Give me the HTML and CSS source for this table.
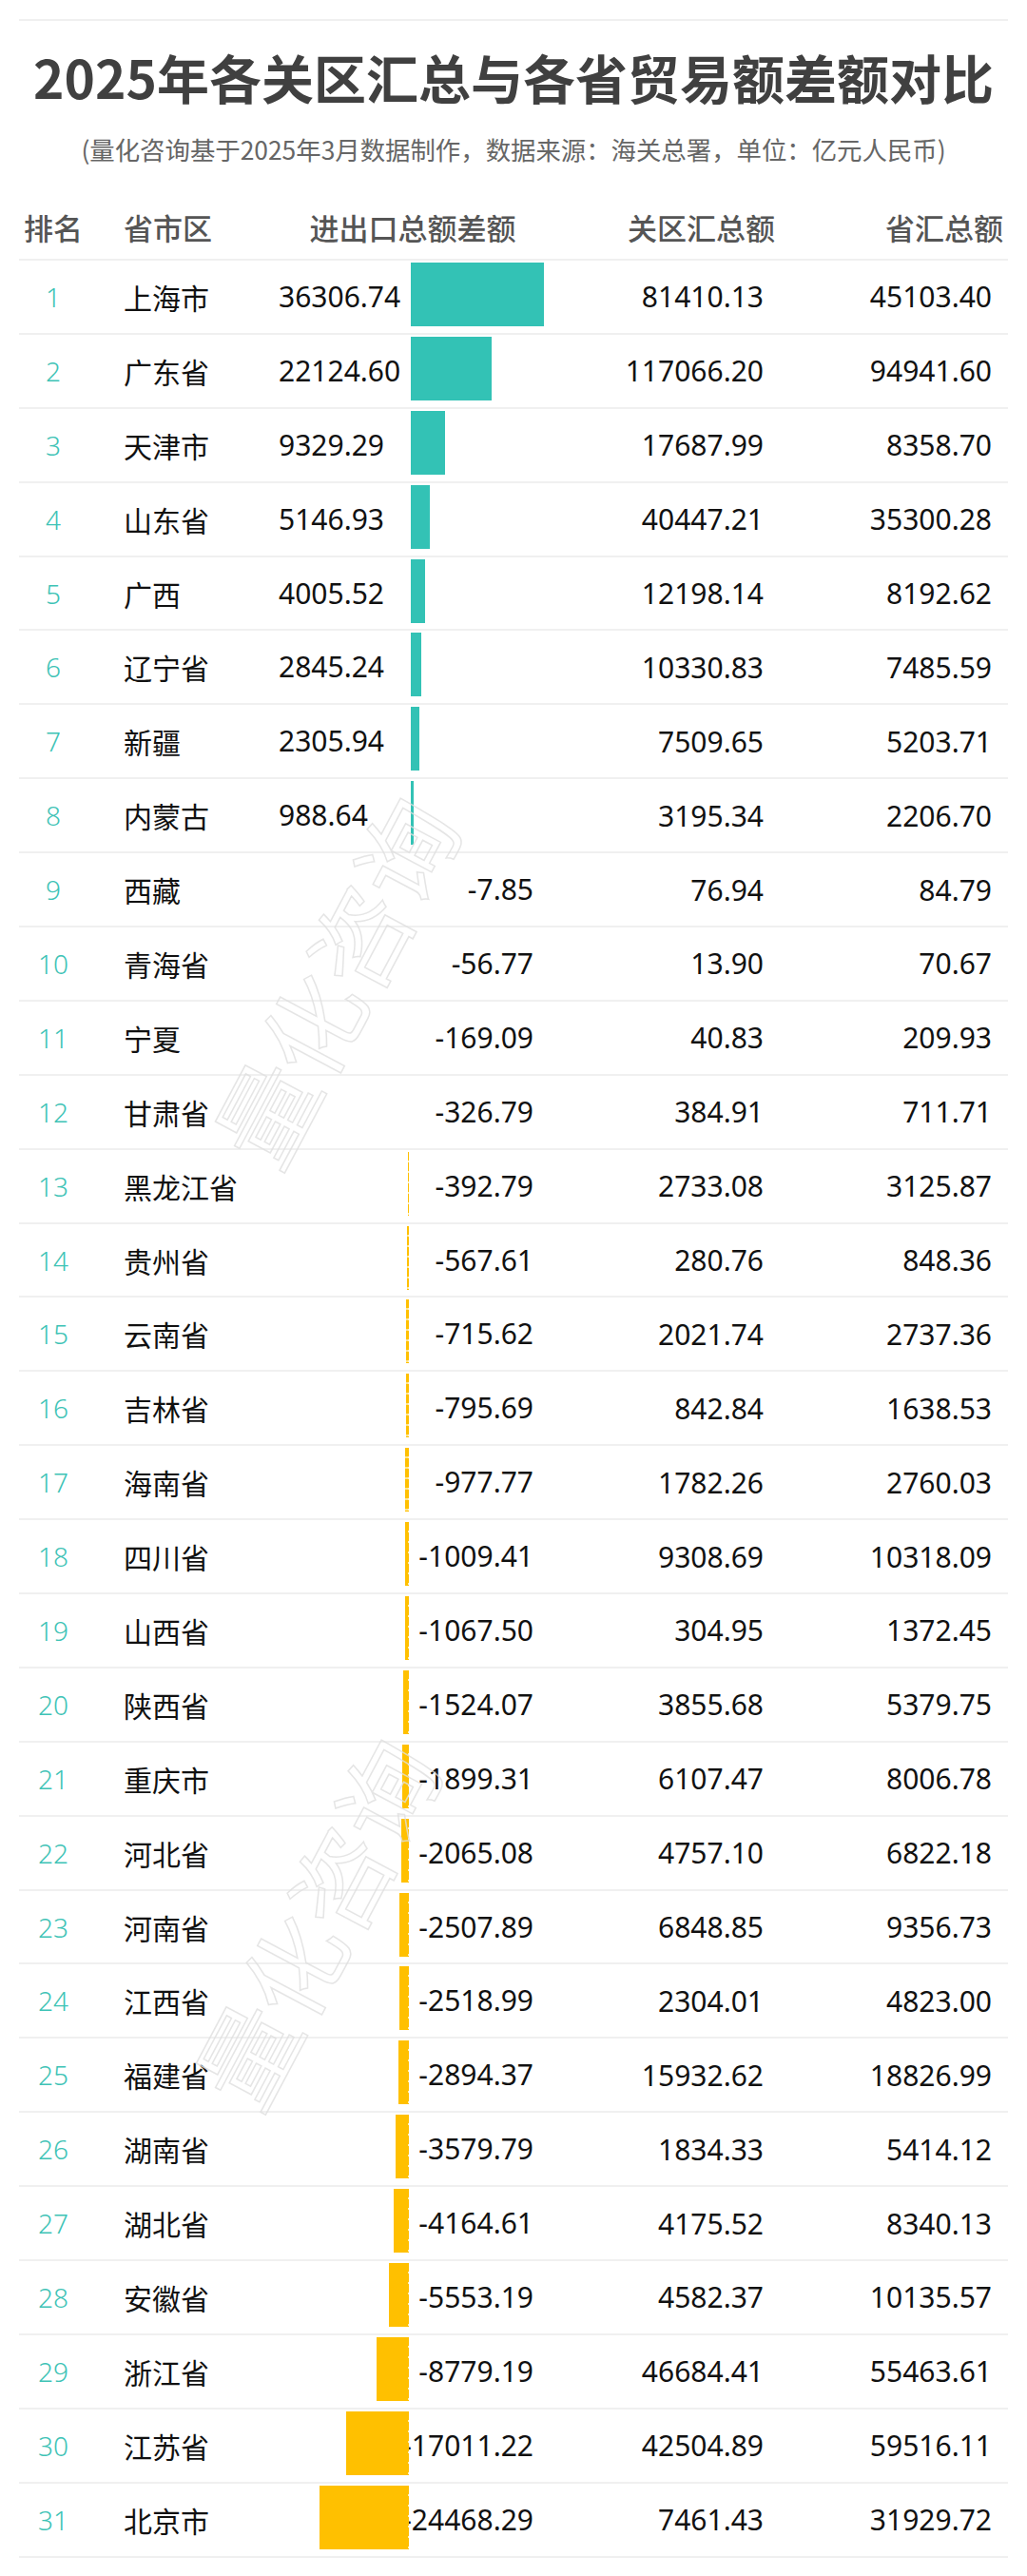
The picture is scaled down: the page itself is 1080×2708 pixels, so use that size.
FILE: index.html
```html
<!DOCTYPE html>
<html lang="zh-CN">
<head>
<meta charset="utf-8">
<title>2025年各关区汇总与各省贸易额差额对比</title>
<link rel="stylesheet" href="styles.css">
</head>
<body>
<div class="page">
  <div class="rule"></div>
  <h1 class="title">2025年各关区汇总与各省贸易额差额对比</h1>
  <p class="subtitle">(量化咨询基于2025年3月数据制作，数据来源：海关总署，单位：亿元人民币)</p>
  <div class="table">
    <div class="row head">
      <div class="c-rank">排名</div>
      <div class="c-name">省市区</div>
      <div class="c-diff">进出口总额差额</div>
      <div class="c-num">关区汇总额</div>
      <div class="c-num">省汇总额</div>
    </div>

    <div class="row pos"><div class="c-rank">1</div><div class="c-name">上海市</div><div class="c-diff"><div class="track"><span class="neg-half"></span><span class="pos-half"><i class="bar" style="width:140px"></i></span></div><span class="val">36306.74</span></div><div class="c-num">81410.13</div><div class="c-num">45103.40</div></div>
    <div class="row pos"><div class="c-rank">2</div><div class="c-name">广东省</div><div class="c-diff"><div class="track"><span class="neg-half"></span><span class="pos-half"><i class="bar" style="width:85.3px"></i></span></div><span class="val">22124.60</span></div><div class="c-num">117066.20</div><div class="c-num">94941.60</div></div>
    <div class="row pos"><div class="c-rank">3</div><div class="c-name">天津市</div><div class="c-diff"><div class="track"><span class="neg-half"></span><span class="pos-half"><i class="bar" style="width:36px"></i></span></div><span class="val">9329.29</span></div><div class="c-num">17687.99</div><div class="c-num">8358.70</div></div>
    <div class="row pos"><div class="c-rank">4</div><div class="c-name">山东省</div><div class="c-diff"><div class="track"><span class="neg-half"></span><span class="pos-half"><i class="bar" style="width:19.8px"></i></span></div><span class="val">5146.93</span></div><div class="c-num">40447.21</div><div class="c-num">35300.28</div></div>
    <div class="row pos"><div class="c-rank">5</div><div class="c-name">广西</div><div class="c-diff"><div class="track"><span class="neg-half"></span><span class="pos-half"><i class="bar" style="width:15.4px"></i></span></div><span class="val">4005.52</span></div><div class="c-num">12198.14</div><div class="c-num">8192.62</div></div>
    <div class="row pos"><div class="c-rank">6</div><div class="c-name">辽宁省</div><div class="c-diff"><div class="track"><span class="neg-half"></span><span class="pos-half"><i class="bar" style="width:11px"></i></span></div><span class="val">2845.24</span></div><div class="c-num">10330.83</div><div class="c-num">7485.59</div></div>
    <div class="row pos"><div class="c-rank">7</div><div class="c-name">新疆</div><div class="c-diff"><div class="track"><span class="neg-half"></span><span class="pos-half"><i class="bar" style="width:8.9px"></i></span></div><span class="val">2305.94</span></div><div class="c-num">7509.65</div><div class="c-num">5203.71</div></div>
    <div class="row pos"><div class="c-rank">8</div><div class="c-name">内蒙古</div><div class="c-diff"><div class="track"><span class="neg-half"></span><span class="pos-half"><i class="bar" style="width:3px"></i></span></div><span class="val">988.64</span></div><div class="c-num">3195.34</div><div class="c-num">2206.70</div></div>

    <div class="row neg"><div class="c-rank">9</div><div class="c-name">西藏</div><div class="c-diff"><div class="track"><span class="neg-half"></span><span class="pos-half"></span></div><span class="val">-7.85</span></div><div class="c-num">76.94</div><div class="c-num">84.79</div></div>
    <div class="row neg"><div class="c-rank">10</div><div class="c-name">青海省</div><div class="c-diff"><div class="track"><span class="neg-half"></span><span class="pos-half"></span></div><span class="val">-56.77</span></div><div class="c-num">13.90</div><div class="c-num">70.67</div></div>
    <div class="row neg"><div class="c-rank">11</div><div class="c-name">宁夏</div><div class="c-diff"><div class="track"><span class="neg-half"></span><span class="pos-half"></span></div><span class="val">-169.09</span></div><div class="c-num">40.83</div><div class="c-num">209.93</div></div>
    <div class="row neg"><div class="c-rank">12</div><div class="c-name">甘肃省</div><div class="c-diff"><div class="track"><span class="neg-half"></span><span class="pos-half"></span></div><span class="val">-326.79</span></div><div class="c-num">384.91</div><div class="c-num">711.71</div></div>
    <div class="row neg"><div class="c-rank">13</div><div class="c-name">黑龙江省</div><div class="c-diff"><div class="track"><span class="neg-half"><i class="bar thin" style="width:1.5px"></i></span><span class="pos-half"></span></div><span class="val">-392.79</span></div><div class="c-num">2733.08</div><div class="c-num">3125.87</div></div>
    <div class="row neg"><div class="c-rank">14</div><div class="c-name">贵州省</div><div class="c-diff"><div class="track"><span class="neg-half"><i class="bar thin" style="width:2.2px"></i></span><span class="pos-half"></span></div><span class="val">-567.61</span></div><div class="c-num">280.76</div><div class="c-num">848.36</div></div>
    <div class="row neg"><div class="c-rank">15</div><div class="c-name">云南省</div><div class="c-diff"><div class="track"><span class="neg-half"><i class="bar thin" style="width:2.8px"></i></span><span class="pos-half"></span></div><span class="val">-715.62</span></div><div class="c-num">2021.74</div><div class="c-num">2737.36</div></div>
    <div class="row neg"><div class="c-rank">16</div><div class="c-name">吉林省</div><div class="c-diff"><div class="track"><span class="neg-half"><i class="bar thin" style="width:3.1px"></i></span><span class="pos-half"></span></div><span class="val">-795.69</span></div><div class="c-num">842.84</div><div class="c-num">1638.53</div></div>
    <div class="row neg"><div class="c-rank">17</div><div class="c-name">海南省</div><div class="c-diff"><div class="track"><span class="neg-half"><i class="bar thin" style="width:3.8px"></i></span><span class="pos-half"></span></div><span class="val">-977.77</span></div><div class="c-num">1782.26</div><div class="c-num">2760.03</div></div>
    <div class="row neg"><div class="c-rank">18</div><div class="c-name">四川省</div><div class="c-diff"><div class="track"><span class="neg-half"><i class="bar" style="width:3.9px"></i></span><span class="pos-half"></span></div><span class="val">-1009.41</span></div><div class="c-num">9308.69</div><div class="c-num">10318.09</div></div>
    <div class="row neg"><div class="c-rank">19</div><div class="c-name">山西省</div><div class="c-diff"><div class="track"><span class="neg-half"><i class="bar" style="width:4.1px"></i></span><span class="pos-half"></span></div><span class="val">-1067.50</span></div><div class="c-num">304.95</div><div class="c-num">1372.45</div></div>
    <div class="row neg"><div class="c-rank">20</div><div class="c-name">陕西省</div><div class="c-diff"><div class="track"><span class="neg-half"><i class="bar" style="width:5.9px"></i></span><span class="pos-half"></span></div><span class="val">-1524.07</span></div><div class="c-num">3855.68</div><div class="c-num">5379.75</div></div>
    <div class="row neg"><div class="c-rank">21</div><div class="c-name">重庆市</div><div class="c-diff"><div class="track"><span class="neg-half"><i class="bar" style="width:7.3px"></i></span><span class="pos-half"></span></div><span class="val">-1899.31</span></div><div class="c-num">6107.47</div><div class="c-num">8006.78</div></div>
    <div class="row neg"><div class="c-rank">22</div><div class="c-name">河北省</div><div class="c-diff"><div class="track"><span class="neg-half"><i class="bar" style="width:8px"></i></span><span class="pos-half"></span></div><span class="val">-2065.08</span></div><div class="c-num">4757.10</div><div class="c-num">6822.18</div></div>
    <div class="row neg"><div class="c-rank">23</div><div class="c-name">河南省</div><div class="c-diff"><div class="track"><span class="neg-half"><i class="bar" style="width:9.7px"></i></span><span class="pos-half"></span></div><span class="val">-2507.89</span></div><div class="c-num">6848.85</div><div class="c-num">9356.73</div></div>
    <div class="row neg"><div class="c-rank">24</div><div class="c-name">江西省</div><div class="c-diff"><div class="track"><span class="neg-half"><i class="bar" style="width:9.7px"></i></span><span class="pos-half"></span></div><span class="val">-2518.99</span></div><div class="c-num">2304.01</div><div class="c-num">4823.00</div></div>
    <div class="row neg"><div class="c-rank">25</div><div class="c-name">福建省</div><div class="c-diff"><div class="track"><span class="neg-half"><i class="bar" style="width:11.2px"></i></span><span class="pos-half"></span></div><span class="val">-2894.37</span></div><div class="c-num">15932.62</div><div class="c-num">18826.99</div></div>
    <div class="row neg"><div class="c-rank">26</div><div class="c-name">湖南省</div><div class="c-diff"><div class="track"><span class="neg-half"><i class="bar" style="width:13.8px"></i></span><span class="pos-half"></span></div><span class="val">-3579.79</span></div><div class="c-num">1834.33</div><div class="c-num">5414.12</div></div>
    <div class="row neg"><div class="c-rank">27</div><div class="c-name">湖北省</div><div class="c-diff"><div class="track"><span class="neg-half"><i class="bar" style="width:16.1px"></i></span><span class="pos-half"></span></div><span class="val">-4164.61</span></div><div class="c-num">4175.52</div><div class="c-num">8340.13</div></div>
    <div class="row neg"><div class="c-rank">28</div><div class="c-name">安徽省</div><div class="c-diff"><div class="track"><span class="neg-half"><i class="bar" style="width:21.4px"></i></span><span class="pos-half"></span></div><span class="val">-5553.19</span></div><div class="c-num">4582.37</div><div class="c-num">10135.57</div></div>
    <div class="row neg"><div class="c-rank">29</div><div class="c-name">浙江省</div><div class="c-diff"><div class="track"><span class="neg-half"><i class="bar" style="width:33.9px"></i></span><span class="pos-half"></span></div><span class="val">-8779.19</span></div><div class="c-num">46684.41</div><div class="c-num">55463.61</div></div>
    <div class="row neg"><div class="c-rank">30</div><div class="c-name">江苏省</div><div class="c-diff"><div class="track"><span class="neg-half"><i class="bar" style="width:65.6px"></i></span><span class="pos-half"></span></div><span class="val">-17011.22</span></div><div class="c-num">42504.89</div><div class="c-num">59516.11</div></div>
    <div class="row neg"><div class="c-rank">31</div><div class="c-name">北京市</div><div class="c-diff"><div class="track"><span class="neg-half"><i class="bar" style="width:94.3px"></i></span><span class="pos-half"></span></div><span class="val">-24468.29</span></div><div class="c-num">7461.43</div><div class="c-num">31929.72</div></div>
  </div>

  <span class="wm wm1" aria-hidden="true">量化咨询</span>
  <span class="wm wm2" aria-hidden="true">量化咨询</span>
</div>
</body>
</html>
```

FILE: styles.css
```css
html, body {
  margin: 0;
  padding: 0;
  background: #ffffff;
}

.page {
  position: relative;
  width: 1080px;
  height: 2708px;
  box-sizing: border-box;
  padding: 20px 20px 0;
  overflow: hidden;
  font-family: "Noto Sans", "Noto Sans CJK SC", sans-serif;
  color: #111111;
}

.rule {
  height: 2px;
  background: #f0f0f0;
}

.title {
  margin: 27px 0 0;
  font-family: "Noto Sans CJK SC", sans-serif;
  font-size: 55px;
  line-height: 62px;
  font-weight: 700;
  color: #404040;
  text-align: center;
}

.subtitle {
  margin: 28px 0 0;
  font-family: "Noto Sans CJK SC", sans-serif;
  font-size: 26.4px;
  line-height: 36px;
  color: #666666;
  text-align: center;
}

.row {
  display: grid;
  grid-template-columns: 72px 201px 270px 240px 240px;
  align-items: center;
  height: 75.9px;
  border-bottom: 2px solid #f0f0f0;
}

.head {
  height: 84px;
  padding-bottom: 13px;
  align-items: end;
  font-family: "Noto Sans CJK SC", sans-serif;
  font-size: 31px;
  line-height: 40px;
  font-weight: 500;
  color: #555555;
}

.head .c-diff {
  display: block;
  height: auto;
  text-align: center;
  padding-left: 12px;
}

.head .c-num {
  margin-right: -12px;
  font-family: "Noto Sans CJK SC", sans-serif;
  font-size: 31px;
}

.c-rank {
  text-align: center;
  font-size: 28px;
  font-weight: 300;
  color: #3ec3b6;
}

.head .c-rank {
  font-size: 31px;
  font-weight: 500;
  color: #555555;
}

.c-name {
  padding-left: 38px;
  font-family: "Noto Sans CJK SC", sans-serif;
  font-size: 30px;
  color: #111111;
  white-space: nowrap;
}

.head .c-name {
  font-size: 31px;
  color: #555555;
}

.c-diff {
  display: grid;
  height: 100%;
  align-items: center;
}

.track,
.val {
  grid-area: 1 / 1;
}

.track {
  align-self: start;
  margin-top: 2px;
  height: 67px;
  display: flex;
}

.neg-half {
  width: 137px;
  display: flex;
  justify-content: flex-end;
}

.pos-half {
  margin-left: 2px;
  display: flex;
}

.bar {
  display: block;
  height: 67px;
  flex: none;
}

.pos .bar {
  background: #33c2b5;
}

.neg .bar {
  position: relative;
  background: #ffc000;
}

.neg .bar::after {
  content: "";
  position: absolute;
  top: 0;
  right: 0;
  width: 1px;
  height: 100%;
  background: repeating-linear-gradient(to bottom, #ffc000 0 9px, #fff0b8 9px 11px);
}

.neg .bar.thin {
  background: repeating-linear-gradient(to bottom, #ffc000 0 9px, #ffe48a 9px 11px);
}

.val {
  font-size: 30px;
  line-height: 40px;
  white-space: nowrap;
}

.pos .val {
  justify-self: start;
}

.neg .val {
  justify-self: end;
  padding-right: 2px;
}

.c-num {
  text-align: right;
  font-size: 30px;
  white-space: nowrap;
}

.wm {
  position: absolute;
  font-family: "Noto Sans CJK SC", sans-serif;
  font-size: 104px;
  line-height: 1;
  font-weight: 400;
  color: transparent;
  -webkit-text-stroke: 1.5px rgba(222, 222, 222, 0.8);
  white-space: nowrap;
  pointer-events: none;
  transform: translate(-50%, -50%) rotate(-62deg);
}

.wm1 {
  left: 350px;
  top: 1030px;
}

.wm2 {
  left: 330px;
  top: 2020px;
}
```
